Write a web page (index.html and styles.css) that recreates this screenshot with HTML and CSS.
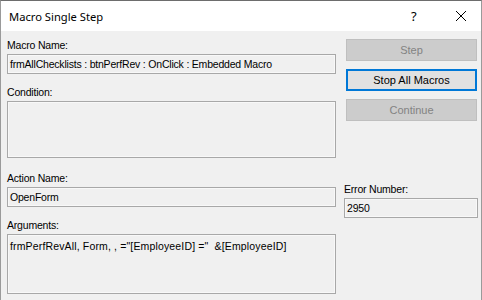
FILE: index.html
```html
<html>
<head>
    <link rel="stylesheet" href="styles.css">
</head>
<body>
    <div class="window">
        <div class="titlebar">
            <div class="title">Macro Single Step</div>
            <div class="help">?</div>
            <div class="close">
                <svg width="10" height="10" viewBox="0 0 10 10">
                    <line x1="0" y1="0" x2="10" y2="10" stroke="#000" stroke-width="1"/>
                    <line x1="10" y1="0" x2="0" y2="10" stroke="#000" stroke-width="1"/>
                </svg>
            </div>
        </div>
        <div class="content">
            <div class="left">
                <div class="label">Macro Name:</div>
                <div class="field single">frmAllChecklists : btnPerfRev : OnClick : Embedded Macro</div>
                <div class="label gap">Condition:</div>
                <div class="field condition"></div>
                <div class="label gap-big">Action Name:</div>
                <div class="field single">OpenForm</div>
                <div class="label gap">Arguments:</div>
                <div class="field args">frmPerfRevAll, Form, , ="[EmployeeID] =" &nbsp;&amp;[EmployeeID]</div>
            </div>
            <div class="right">
                <div class="button disabled">Step</div>
                <div class="button default">Stop All Macros</div>
                <div class="button disabled">Continue</div>
                <div class="label error-label">Error Number:</div>
                <div class="field single">2950</div>
            </div>
        </div>
    </div>
</body>
</html>
```

FILE: styles.css
```css
body {
    margin: 0;
    width: 482px;
    height: 300px;
    overflow: hidden;
    font-family: "Liberation Sans", Arial, sans-serif;
    font-size: 10.5px;
    letter-spacing: -0.2px;
    color: #000;
    background-color: #f0f0f0;
}
.window {
    height: 300px;
    box-sizing: border-box;
    border-top: 1px solid #6d6d6d;
    border-left: 1px solid #9a9a9a;
    border-right: 1px solid #9a9a9a;
    background-color: #f0f0f0;
}
.titlebar {
    height: 30px;
    background-color: #ffffff;
    display: flex;
    align-items: center;
}
.title {
    font-family: "Noto Sans", sans-serif;
    font-size: 11.2px;
    letter-spacing: 0;
    padding-left: 8px;
    flex: 1;
}
.help {
    font-family: "Noto Sans", sans-serif;
    font-size: 13px;
    letter-spacing: 0;
    width: 8px;
    margin-right: 37px;
}
.close {
    width: 10px;
    height: 10px;
    margin-right: 15px;
    display: flex;
}
.content {
    display: flex;
    padding: 7px 0 0 6px;
}
.left {
    width: 329px;
    display: flex;
    flex-direction: column;
}
.right {
    width: 134px;
    margin-left: 8px;
    padding-top: 1px;
    display: flex;
    flex-direction: column;
}
.label {
    height: 14px;
    line-height: 14px;
    margin-bottom: 2px;
}
.gap {
    margin-top: 11px;
}
.gap-big {
    margin-top: 13px;
}
.field {
    box-sizing: border-box;
    border: 1px solid #a8a8a8;
    box-shadow: inset 0 0 0 1px #f8f8f8;
    background-color: #f0f0f0;
    padding: 0 2px;
    line-height: 14px;
}
.single {
    height: 20px;
    display: flex;
    align-items: center;
}
.condition {
    height: 57px;
}
.args {
    height: 60px;
    padding-top: 4px;
    letter-spacing: 0.15px;
}
.button {
    box-sizing: border-box;
    height: 22px;
    width: 131px;
    margin-left: 2px;
    margin-bottom: 8px;
    display: flex;
    align-items: center;
    justify-content: center;
    letter-spacing: 0;
    font-size: 11px;
}
.disabled {
    background-color: #cccccc;
    border: 1px solid #bfbfbf;
    color: #838383;
}
.default {
    background-color: #e1e1e1;
    border: 2px solid #0078d7;
}
.error-label {
    margin-top: 53px;
}
```
